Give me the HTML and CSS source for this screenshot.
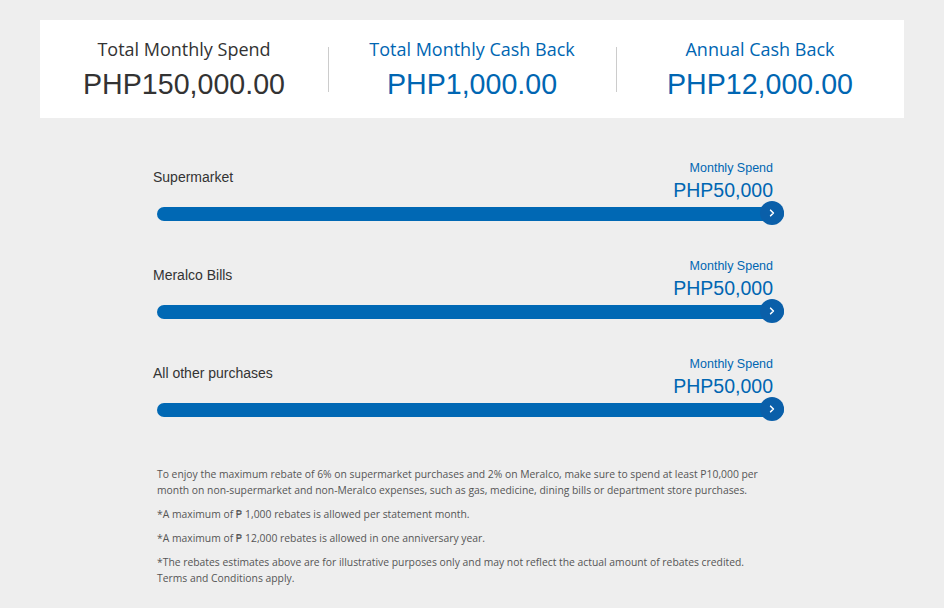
FILE: index.html
```html
<!DOCTYPE html>
<html>
<head>
<meta charset="utf-8">
<link rel="stylesheet" href="styles.css">
</head>
<body>
<div class="page">
  <div class="summary">
    <div class="stat">
      <div class="stat-title">Total Monthly Spend</div>
      <div class="stat-value">PHP150,000.00</div>
    </div>
    <div class="stat stat-blue">
      <div class="stat-title">Total Monthly Cash Back</div>
      <div class="stat-value">PHP1,000.00</div>
    </div>
    <div class="stat stat-blue">
      <div class="stat-title">Annual Cash Back</div>
      <div class="stat-value">PHP12,000.00</div>
    </div>
  </div>

  <div class="sliders">
    <div class="row">
      <div class="row-head">
        <div class="row-label">Supermarket</div>
        <div class="row-amount">
          <div class="amount-caption">Monthly Spend</div>
          <div class="amount-value">PHP50,000</div>
        </div>
      </div>
      <div class="track-wrap">
        <div class="track"></div>
        <div class="thumb"><svg width="10" height="10" viewBox="0 0 10 10"><path d="M3.6 2.2 L6.4 5 L3.6 7.8" fill="none" stroke="#fff" stroke-width="1.6" stroke-linecap="round" stroke-linejoin="round"/></svg></div>
      </div>
    </div>
    <div class="row">
      <div class="row-head">
        <div class="row-label">Meralco Bills</div>
        <div class="row-amount">
          <div class="amount-caption">Monthly Spend</div>
          <div class="amount-value">PHP50,000</div>
        </div>
      </div>
      <div class="track-wrap">
        <div class="track"></div>
        <div class="thumb"><svg width="10" height="10" viewBox="0 0 10 10"><path d="M3.6 2.2 L6.4 5 L3.6 7.8" fill="none" stroke="#fff" stroke-width="1.6" stroke-linecap="round" stroke-linejoin="round"/></svg></div>
      </div>
    </div>
    <div class="row">
      <div class="row-head">
        <div class="row-label">All other purchases</div>
        <div class="row-amount">
          <div class="amount-caption">Monthly Spend</div>
          <div class="amount-value">PHP50,000</div>
        </div>
      </div>
      <div class="track-wrap">
        <div class="track"></div>
        <div class="thumb"><svg width="10" height="10" viewBox="0 0 10 10"><path d="M3.6 2.2 L6.4 5 L3.6 7.8" fill="none" stroke="#fff" stroke-width="1.6" stroke-linecap="round" stroke-linejoin="round"/></svg></div>
      </div>
    </div>
  </div>

  <div class="notes">
    <p>To enjoy the maximum rebate of 6% on supermarket purchases and 2% on Meralco, make sure to spend at least P10,000 per month on non-supermarket and non-Meralco expenses, such as gas, medicine, dining bills or department store purchases.</p>
    <p>*A maximum of ₱ 1,000 rebates is allowed per statement month.</p>
    <p>*A maximum of ₱ 12,000 rebates is allowed in one anniversary year.</p>
    <p>*The rebates estimates above are for illustrative purposes only and may not reflect the actual amount of rebates credited. Terms and Conditions apply.</p>
  </div>
</div>
</body>
</html>
```

FILE: styles.css
```css
* { box-sizing: border-box; }
html, body { margin: 0; padding: 0; background: #eeeeee; }
body { width: 944px; height: 608px; overflow: hidden; }

.page { padding: 20px 40px 0 40px; }

.summary {
  display: flex;
  background: #ffffff;
  height: 98px;
  align-items: center;
}
.stat {
  flex: 1 1 0;
  text-align: center;
  color: #333333;
  position: relative;
}
.stat + .stat::before {
  content: "";
  position: absolute;
  left: 0;
  top: 50%;
  height: 45px;
  margin-top: -22px;
  border-left: 1px solid #cccccc;
}
.stat-blue { color: #0066b2; }
.stat-title {
  font-family: "Open Sans", "DejaVu Sans", sans-serif;
  font-size: 18px;
  line-height: 22px;
}
.stat-value {
  font-family: "Liberation Sans", Arial, sans-serif;
  font-size: 28.6px;
  line-height: 32px;
  margin-top: 8px;
}

.sliders {
  margin: 43px 0 0 113px;
  width: 631px;
}
.row { margin-bottom: 34px; }
.row-head {
  display: flex;
  justify-content: space-between;
  align-items: flex-start;
  height: 40px;
  padding-right: 11px;
}
.row-label {
  font-family: "Liberation Sans", Arial, sans-serif;
  font-size: 14px;
  line-height: 17px;
  color: #333333;
  margin-top: 7.5px;
}
.row-amount {
  text-align: right;
  color: #0066b2;
  font-family: "Liberation Sans", Arial, sans-serif;
}
.amount-caption { font-size: 12.5px; line-height: 15px; }
.amount-value { font-size: 19.5px; line-height: 22px; margin-top: 3px; }

.track-wrap {
  position: relative;
  height: 24px;
  display: flex;
  align-items: center;
  padding-left: 4px;
}
.track {
  flex: 1;
  height: 14px;
  background: #0068b4;
  border-radius: 7px;
  margin-top: 2px;
}
.thumb {
  position: absolute;
  right: 0;
  top: 0;
  width: 24px;
  height: 24px;
  border-radius: 50%;
  background: #0a5fa9;
  display: flex;
  align-items: center;
  justify-content: center;
}
.thumb svg { display: block; }

.notes {
  margin: 45px 0 0 117px;
  width: 606px;
  font-family: "Open Sans", "DejaVu Sans", sans-serif;
  font-size: 10.35px;
  line-height: 16px;
  color: #555555;
}
.notes p { margin: 0 0 8px 0; }
```
